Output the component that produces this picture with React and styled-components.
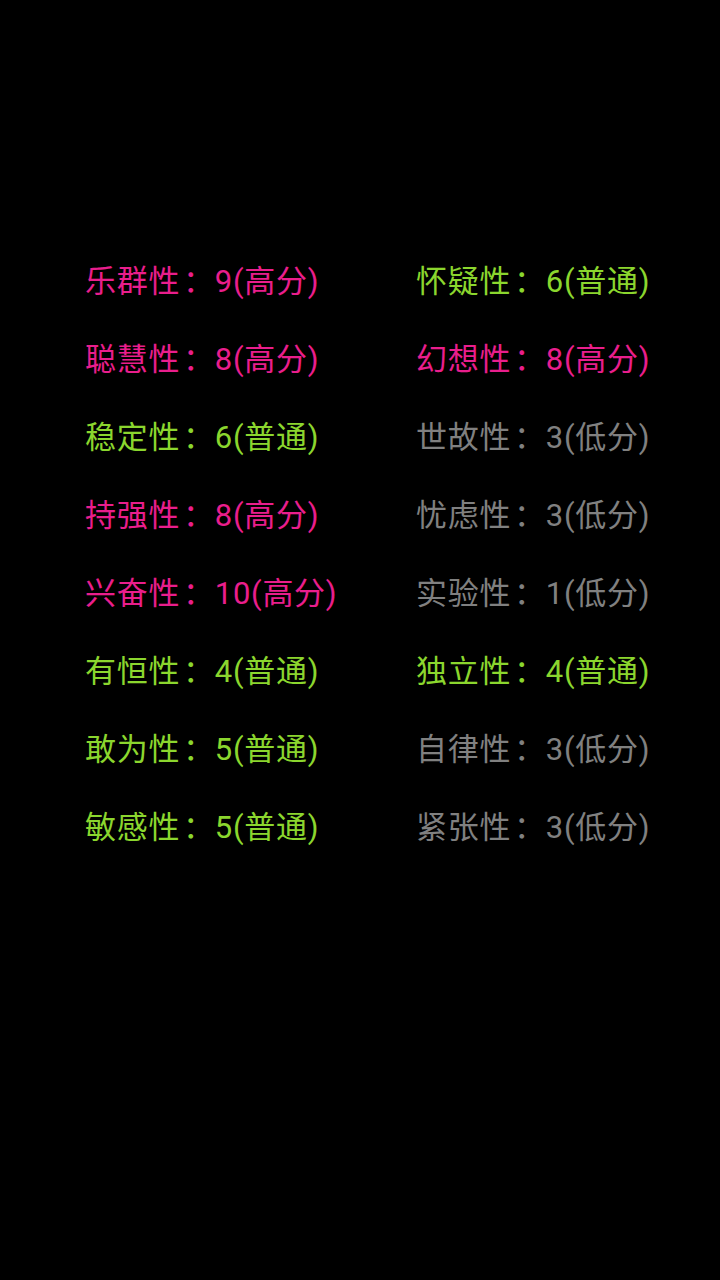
import React from 'react';
import styled, { createGlobalStyle } from 'styled-components';

const GlobalStyle = createGlobalStyle`
	html, body {
		margin: 0;
		padding: 0;
		background: #000;
	}
	body {
		font-family: Roboto, "Noto Sans CJK SC", sans-serif;
	}
`;

const COLORS = {
	high: '#e91e8c',
	normal: '#8bd62e',
	low: '#808080',
};

const LABELS = { high: '高分', normal: '普通', low: '低分' };

const left = [
	['乐群性', 9, 'high'],
	['聪慧性', 8, 'high'],
	['稳定性', 6, 'normal'],
	['持强性', 8, 'high'],
	['兴奋性', 10, 'high'],
	['有恒性', 4, 'normal'],
	['敢为性', 5, 'normal'],
	['敏感性', 5, 'normal'],
];

const right = [
	['怀疑性', 6, 'normal'],
	['幻想性', 8, 'high'],
	['世故性', 3, 'low'],
	['忧虑性', 3, 'low'],
	['实验性', 1, 'low'],
	['独立性', 4, 'normal'],
	['自律性', 3, 'low'],
	['紧张性', 3, 'low'],
];

const Screen = styled.div`
	width: 720px;
	height: 1280px;
	background: #000;
	padding-top: 243px;
	padding-left: 85px;
	box-sizing: border-box;
`;

const Grid = styled.div`
	display: grid;
	grid-template-columns: 331px 300px;
	grid-auto-flow: column;
	grid-template-rows: repeat(8, 78px);
`;

const Item = styled.div`
	font-size: 31px;
	letter-spacing: 0.7px;
	line-height: 78px;
	white-space: nowrap;
	color: ${props => COLORS[props.level]};
`;

const Colon = styled.span`
	padding-left: 3px;
`;

const Trait = ({ name, score, level }) => (
	<Item level={level}>
		{name}<Colon>：</Colon>{score}({LABELS[level]})
	</Item>
);

export default function App() {
	return (
		<>
			<GlobalStyle />
			<Screen>
				<Grid>
					{[...left, ...right].map(([name, score, level]) => (
						<Trait key={name} name={name} score={score} level={level} />
					))}
				</Grid>
			</Screen>
		</>
	);
}
